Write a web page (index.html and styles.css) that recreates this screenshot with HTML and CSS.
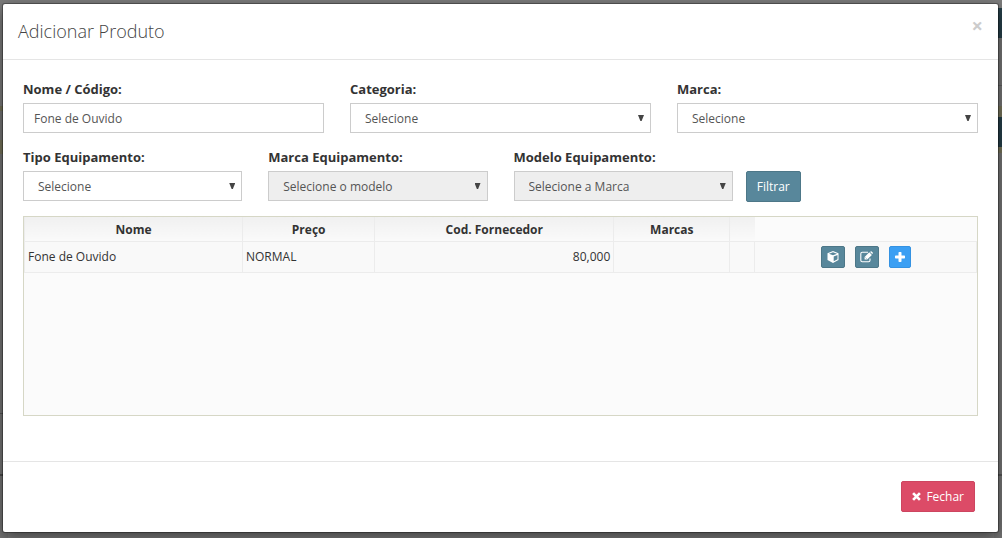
FILE: index.html
```html
<!DOCTYPE html>
<html lang="pt-BR">
<head>
<meta charset="utf-8">
<title>Adicionar Produto</title>
<link rel="stylesheet" href="styles.css">
</head>
<body>
<div class="modal" role="dialog" aria-labelledby="modal-title">
  <header class="modal-header">
    <h1 class="modal-title" id="modal-title">Adicionar Produto</h1>
    <button class="close" type="button" aria-label="Fechar janela">×</button>
  </header>
  <form class="modal-body">
    <div class="row row-3">
      <div class="field">
        <label for="nome">Nome / Código:</label>
        <input class="control" id="nome" type="text" value="Fone de Ouvido">
      </div>
      <div class="field">
        <label for="categoria">Categoria:</label>
        <div class="select"><select class="control" id="categoria"><option>Selecione</option></select></div>
      </div>
      <div class="field">
        <label for="marca">Marca:</label>
        <div class="select"><select class="control" id="marca"><option>Selecione</option></select></div>
      </div>
    </div>
    <div class="row row-4">
      <div class="field">
        <label for="tipo">Tipo Equipamento:</label>
        <div class="select"><select class="control" id="tipo"><option>Selecione</option></select></div>
      </div>
      <div class="field">
        <label for="marca-eq">Marca Equipamento:</label>
        <div class="select"><select class="control" id="marca-eq" disabled><option>Selecione o modelo</option></select></div>
      </div>
      <div class="field">
        <label for="modelo-eq">Modelo Equipamento:</label>
        <div class="select"><select class="control" id="modelo-eq" disabled><option>Selecione a Marca</option></select></div>
      </div>
      <div class="field-action">
        <button class="btn btn-primary" type="button">Filtrar</button>
      </div>
    </div>
    <div class="grid-box">
      <table class="grid">
        <colgroup><col class="c-nome"><col class="c-preco"><col class="c-cod"><col class="c-marcas"><col class="c-blank"><col></colgroup>
        <thead>
          <tr><th>Nome</th><th>Preço</th><th>Cod. Fornecedor</th><th>Marcas</th><th class="last-head"></th><td class="no-head"></td></tr>
        </thead>
        <tbody>
          <tr>
            <td>Fone de Ouvido</td><td>NORMAL</td><td class="num">80,000</td><td></td><td></td>
            <td>
              <div class="actions">
                <button class="btn btn-icon btn-primary" type="button" aria-label="Detalhes">
                  <svg width="12" height="12" viewBox="0 0 12 12"><path fill="#fff" fill-rule="evenodd" d="M6 0 11.5 2.2V9L6 12 .5 9V2.2ZM6 1.2 2 2.8 6 4.3 10 2.8ZM6.7 5.4V10.3L10.5 8.3V3.9Z"/></svg>
                </button>
                <button class="btn btn-icon btn-primary" type="button" aria-label="Editar">
                  <svg width="13" height="12" viewBox="0 0 13 12"><path fill="none" stroke="#fff" stroke-width="1.1" d="M8 1.3H2.2Q.8 1.3.8 2.7V9.3Q.8 10.7 2.2 10.7H8.6Q10 10.7 10 9.3V7.4"/><path fill="#fff" d="M4.6 6 9.3 1.3 11.9 3.9 7.2 8.6H4.6ZM10.1.9 10.6.4Q11.1 0 11.6.5L12.7 1.6Q13.1 2.1 12.7 2.6L12.2 3.1Z"/><path fill="none" stroke="#58879b" stroke-width=".5" d="M5.4 6.5 6.8 7.9"/></svg>
                </button>
                <button class="btn btn-icon btn-add" type="button" aria-label="Adicionar">
                  <svg width="10" height="10" viewBox="0 0 10 10"><path fill="#fff" d="M4.2 0H5.8Q6.5 0 6.5.7V3.5H9.3Q10 3.5 10 4.2V5.8Q10 6.5 9.3 6.5H6.5V9.3Q6.5 10 5.8 10H4.2Q3.5 10 3.5 9.3V6.5H.7Q0 6.5 0 5.8V4.2Q0 3.5.7 3.5H3.5V.7Q3.5 0 4.2 0Z"/></svg>
                </button>
              </div>
            </td>
          </tr>
        </tbody>
      </table>
    </div>
  </form>
  <footer class="modal-footer">
    <button class="btn btn-danger" type="button">
      <svg width="9" height="9" viewBox="0 0 10 10"><path fill="none" stroke="#fff" stroke-width="3" d="M1.2 1.2 8.8 8.8M8.8 1.2 1.2 8.8"/></svg>
      Fechar
    </button>
  </footer>
</div>
</body>
</html>
```
FILE: styles.css
```css
* { box-sizing: border-box; }

html {
  min-height: 100%;
  background-color: #7c7c7c;
  background-image:
    linear-gradient(#7c7c7c 8px, #263f49 8px 38px, #757575 38px 85px, #606060 85px 86px, #757575 86px 106px, #77745b 106px 117px, #263f49 117px 147px, #77745b 147px 153px, #757575 153px 474px, #555 474px 476px, #757575 476px),
    linear-gradient(#7c7c7c 106px, #77745b 106px 111px, #757575 111px 140px, #77745b 140px 154px, #757575 154px 413px, #555 413px 414px, #757575 414px 474px, #4c4c4c 474px 476px, #757575 476px);
  background-position: right top, left top;
  background-size: 8px 100%;
  background-repeat: no-repeat;
}

body {
  margin: 0;
  padding: 4px 4px 6px 3px;
  color: #333;
  font: 12px/18px "Open Sans", sans-serif;
}

button, input, select { font: inherit; }

.modal {
  background: #fff;
  border-radius: 2px;
  box-shadow: 0 0 0 1px rgba(0, 0, 0, .3), 0 5px 15px rgba(0, 0, 0, .5);
}

.modal-header {
  display: flex;
  justify-content: space-between;
  align-items: flex-start;
  padding: 15px;
  border-bottom: 1px solid #e5e5e5;
}

.modal-title {
  margin: 0;
  color: #444;
  font-size: 18px;
  font-weight: 300;
  line-height: 25px;
}

.close {
  padding: 0;
  border: 0;
  background: none;
  color: #ccc;
  font-size: 20px;
  font-weight: 700;
  line-height: 14px;
}

.modal-body { padding: 20px 20px 45px; }

.row {
  display: grid;
  margin: 0 -13px;
}
.row-3 { grid-template-columns: repeat(3, 1fr); }
.row-4 { grid-template-columns: repeat(4, 1fr); margin-top: 15px; }

.field { padding: 0 13px; }
.field label {
  display: block;
  margin-bottom: 5px;
  font-size: 13px;
  font-weight: 700;
}
.field-action { align-self: end; height: 30px; }

.control {
  display: block;
  width: 100%;
  height: 30px;
  padding: 0 10px;
  border: 1px solid #ccc;
  border-radius: 0;
  background: #fff;
  color: #555;
}
.select { position: relative; }
.select .control { padding: 2px 14px 0; appearance: none; }
.select .control:disabled { background: #eee; opacity: 1; }
.select::after {
  content: "";
  position: absolute;
  top: 12px;
  right: 7px;
  width: 6px;
  height: 6px;
  background: #444;
  clip-path: polygon(0 0, 100% 0, 60% 100%, 40% 100%);
  pointer-events: none;
}

.btn {
  display: inline-flex;
  align-items: center;
  justify-content: center;
  gap: 5px;
  height: 31px;
  padding: 0 10px;
  border: 1px solid;
  border-radius: 2px;
  color: #fff;
}
.btn-primary { background: #58879b; border-color: #4d7788; }
.btn-add { background: #3b9ff3; border-color: #3492e2; }
.btn-danger { background: #dc4b67; border-color: #cd4560; }
.btn-icon { width: 24px; height: 22px; padding: 0; }
.btn-add.btn-icon { width: 22px; }

.grid-box {
  min-height: 200px;
  margin-top: 15px;
  border: 1px solid #d6d7c6;
  background: #fbfbfb;
}
.grid {
  width: 100%;
  border-collapse: collapse;
  table-layout: fixed;
}
.grid th, .grid td { border: 1px solid #ececec; }
.grid th {
  height: 24px;
  padding: 2px 0 0;
  border-top: 0;
  background: linear-gradient(#f0f0f0, #fafafa);
  font-weight: 700;
}
.grid .last-head { border-right: 0; }
.grid .no-head { padding: 0; border-width: 0 0 1px; }
.grid tbody td { height: 31px; padding: 0 3px; background: #f9f9f9; }
.grid .num { text-align: right; }
.c-nome { width: 22.9%; }
.c-preco { width: 13.9%; }
.c-cod { width: 25.1%; }
.c-marcas { width: 12.2%; }
.c-blank { width: 2.6%; }

.actions { display: flex; justify-content: center; gap: 10px; }

.modal-footer {
  display: flex;
  justify-content: flex-end;
  padding: 19px 23px 20px;
  border-top: 1px solid #e5e5e5;
}
```
